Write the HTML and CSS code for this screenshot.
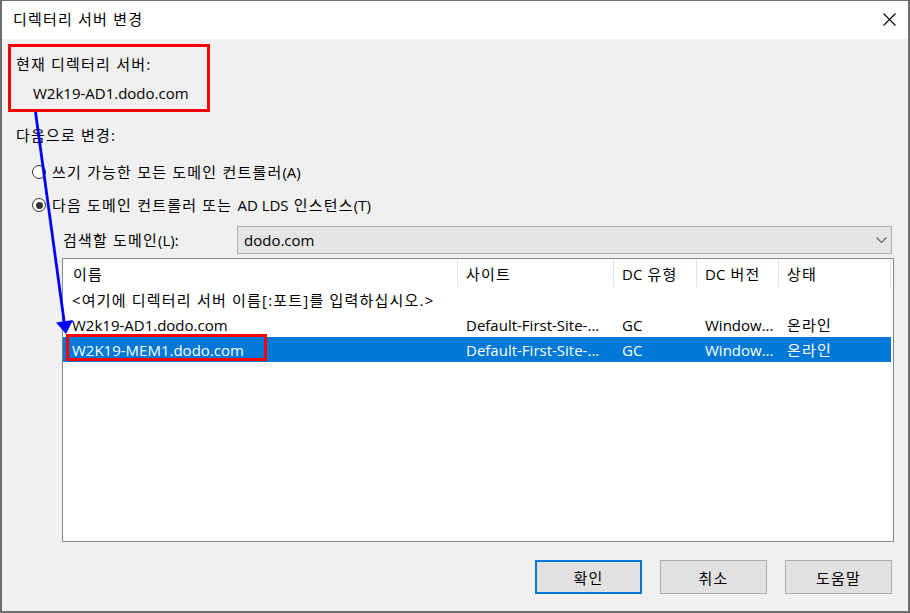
FILE: index.html
```html
<!DOCTYPE html>
<html lang="ko">
<head>
<meta charset="utf-8">
<title>디렉터리 서버 변경</title>
<link rel="stylesheet" href="styles.css">
</head>
<body>
<div class="window">
  <div class="titlebar">
    <span class="title">디렉터리 서버 변경</span>
    <svg class="close" width="13" height="13" viewBox="0 0 13 13"><path d="M0.5 0.5 L12.5 12.5 M12.5 0.5 L0.5 12.5" stroke="#000" stroke-width="1.1" fill="none"/></svg>
  </div>
  <div class="content">
    <div class="current">
      <div class="current-label">현재 디렉터리 서버:</div>
      <div class="current-server en">W2k19-AD1.dodo.com</div>
    </div>
    <div class="change">다음으로 변경:</div>
    <div class="radio-row first"><span class="radio"></span><span>쓰기 가능한 모든 도메인 컨트롤러<span class="en">(A)</span></span></div>
    <div class="radio-row"><span class="radio checked"></span><span>다음 도메인 컨트롤러 또는 <span class="en">AD LDS</span> 인스턴스<span class="en">(T)</span></span></div>
    <div class="search-row">
      <span class="search-label">검색할 도메인<span class="en">(L):</span></span>
      <div class="select">
        <span class="en">dodo.com</span>
        <svg class="chevron" width="11" height="6" viewBox="0 0 11 6"><path d="M0.5 0.5 L5.5 5.5 L10.5 0.5" stroke="#606060" stroke-width="1.1" fill="none"/></svg>
      </div>
    </div>
    <div class="list">
      <div class="row header">
        <div class="cell">이름</div>
        <div class="cell">사이트</div>
        <div class="cell"><span class="en">DC</span>&nbsp;유형</div>
        <div class="cell"><span class="en">DC</span>&nbsp;버전</div>
        <div class="cell last">상태</div>
      </div>
      <div class="row">
        <div class="cell wide">&lt;여기에 디렉터리 서버 이름[:포트]를 입력하십시오.&gt;</div>
      </div>
      <div class="row">
        <div class="cell en">W2k19-AD1.dodo.com</div>
        <div class="cell en">Default-First-Site-...</div>
        <div class="cell en">GC</div>
        <div class="cell en">Window...</div>
        <div class="cell">온라인</div>
      </div>
      <div class="row selected">
        <div class="cell name en">W2K19-MEM1.dodo.com<span class="mark"></span></div>
        <div class="cell en">Default-First-Site-...</div>
        <div class="cell en">GC</div>
        <div class="cell en">Window...</div>
        <div class="cell">온라인</div>
      </div>
    </div>
    <div class="buttons">
      <button class="btn default">확인</button>
      <button class="btn">취소</button>
      <button class="btn">도움말</button>
    </div>
  </div>
  <svg class="arrow" width="910" height="613" viewBox="0 0 910 613">
    <line x1="35.5" y1="112" x2="64.2" y2="322" stroke="#0000ff" stroke-width="2.8"/>
    <polygon points="56,322.5 73,320 66,334" fill="#0000ff"/>
  </svg>
</div>
</body>
</html>
```

FILE: styles.css
```css
* { box-sizing: border-box; }
html, body { margin: 0; padding: 0; }
body {
  width: 910px;
  height: 613px;
  overflow: hidden;
  background: #fff;
  font-family: "Open Sans", "Noto Sans CJK KR", sans-serif;
  font-size: 15px;
  letter-spacing: 1.2px;
  color: #000;
}
.en { letter-spacing: 0; }
.window {
  position: relative;
  width: 910px;
  height: 613px;
  border: 2px solid #6e6e6e;
  border-top-width: 1px;
  display: flex;
  flex-direction: column;
}
.titlebar {
  height: 38px;
  flex: none;
  background: #fff;
  display: flex;
  align-items: center;
  justify-content: space-between;
  padding: 0 12px 2px 11px;
}
.title { line-height: 20px; }
.close { display: block; }
.content {
  flex: 1;
  background: #f0f0f0;
  display: flex;
  flex-direction: column;
}
.current {
  margin: 5px 0 0 6px;
  width: 202px;
  height: 68px;
  border: 3px solid #ff0000;
  padding: 7px 0 0 5px;
  line-height: 20px;
}
.current-server { margin: 9px 0 0 17px; }
.change {
  margin-top: 13px;
  padding-left: 14px;
  line-height: 20px;
}
.radio-row {
  display: flex;
  align-items: center;
  gap: 6px;
  height: 20px;
  margin: 13px 0 0 30px;
  line-height: 20px;
}
.radio-row.first { margin-top: 17px; }
.radio {
  width: 14px;
  height: 14px;
  border: 1px solid #333;
  border-radius: 50%;
  background: #fff;
  display: flex;
  align-items: center;
  justify-content: center;
  flex: none;
}
.radio.checked::after {
  content: "";
  width: 7px;
  height: 7px;
  border-radius: 50%;
  background: #333;
}
.search-row {
  display: flex;
  align-items: center;
  height: 28px;
  margin: 11px 0 0 61px;
}
.search-label { width: 174px; line-height: 20px; }
.select {
  width: 655px;
  height: 28px;
  border: 1px solid #adadad;
  background: #e5e5e5;
  display: flex;
  align-items: center;
  justify-content: space-between;
  padding: 0 4px 0 6px;
}
.chevron { display: block; }
.list {
  margin: 4px 0 0 60px;
  width: 832px;
  height: 284px;
  border: 1px solid #828790;
  background: #fff;
}
.row {
  display: grid;
  grid-template-columns: 394px 156px 83px 82px 113px;
  height: 25px;
  align-items: center;
  line-height: 20px;
  width: 828px;
}
.row.header { height: 28px; align-items: stretch; }
.cell {
  padding-left: 8px;
  border-left: 1px solid transparent;
  white-space: nowrap;
  overflow: hidden;
}
.cell:first-child { border-left: none; padding-left: 9px; }
.header .cell {
  border-left-color: #e5e5e5;
  display: flex;
  align-items: center;
  padding-top: 2px;
}
.header .cell:first-child { padding-left: 10px; }
.header .cell.last { border-right: 1px solid #e5e5e5; }
.cell.wide { grid-column: 1 / -1; overflow: visible; }
.row.selected { background: #0078d7; color: #fff; }
.cell.name { position: relative; overflow: visible; }
.mark {
  position: absolute;
  left: 3px;
  top: -6px;
  width: 201px;
  height: 27px;
  border: 3px solid #ff0000;
}
.buttons {
  display: flex;
  justify-content: flex-end;
  gap: 18px;
  padding-right: 16px;
  margin-top: 18px;
}
.btn {
  width: 107px;
  height: 34px;
  border: 1px solid #adadad;
  background: #e1e1e1;
  font-family: inherit;
  font-size: 15px;
  letter-spacing: 1.2px;
  color: #000;
  padding: 0;
}
.btn.default { border: 2px solid #0078d7; }
.arrow {
  position: absolute;
  left: -2px;
  top: -1px;
  pointer-events: none;
}
```
